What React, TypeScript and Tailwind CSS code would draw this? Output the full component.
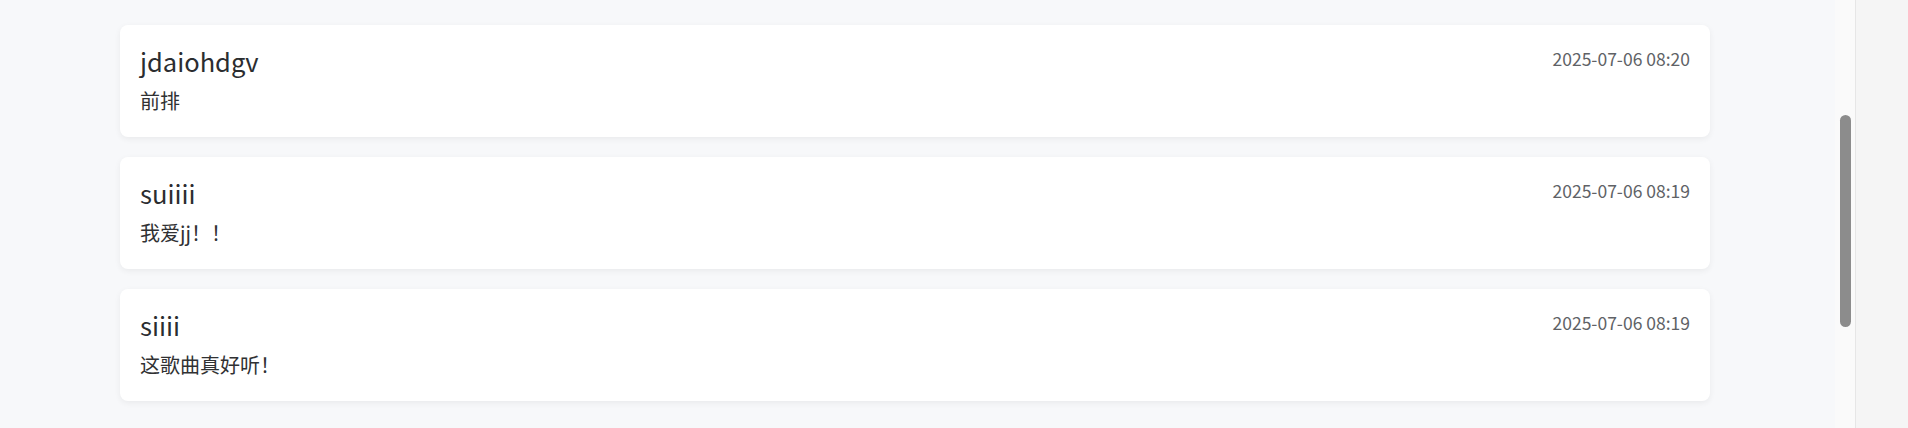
import React from "react";

const comments = [
  { user: "jdaiohdgv", time: "2025-07-06 08:20", text: "前排" },
  { user: "suiiii", time: "2025-07-06 08:19", text: "我爱jj！！" },
  { user: "siiii", time: "2025-07-06 08:19", text: "这歌曲真好听！" },
];

export default function App() {
  return (
    <div
      className="flex h-[428px] w-[1908px] overflow-hidden bg-[#f7f8fa]"
      style={{ fontFamily: '"Noto Sans CJK SC", "Noto Sans", sans-serif' }}
    >
      <div className="flex-1 pl-[120px] pt-[25px]">
        <div className="flex w-[1590px] flex-col gap-[20px]">
          {comments.map((c) => (
            <div
              key={c.user}
              className="h-[112px] rounded-lg bg-white px-[20px] pt-[14px] shadow-[0_2px_6px_rgba(0,0,0,0.06)]"
            >
              <div className="flex items-start justify-between">
                <span className="text-[25.5px] leading-[44px] text-[#2b2d30]">{c.user}</span>
                <span className="text-[17.5px] leading-[40px] text-[#606266]">{c.time}</span>
              </div>
              <div className="mt-[3px] text-[20px] leading-[30px] text-[#303133]">{c.text}</div>
            </div>
          ))}
        </div>
      </div>
      <div className="flex w-[20px] justify-center bg-[#fafafa] pt-[115px]">
        <div className="h-[212px] w-[11px] rounded-full bg-[#8c8c8c]" />
      </div>
      <div className="w-[53px] border-l border-[#e6e6e6] bg-[#f5f5f5]" />
    </div>
  );
}
